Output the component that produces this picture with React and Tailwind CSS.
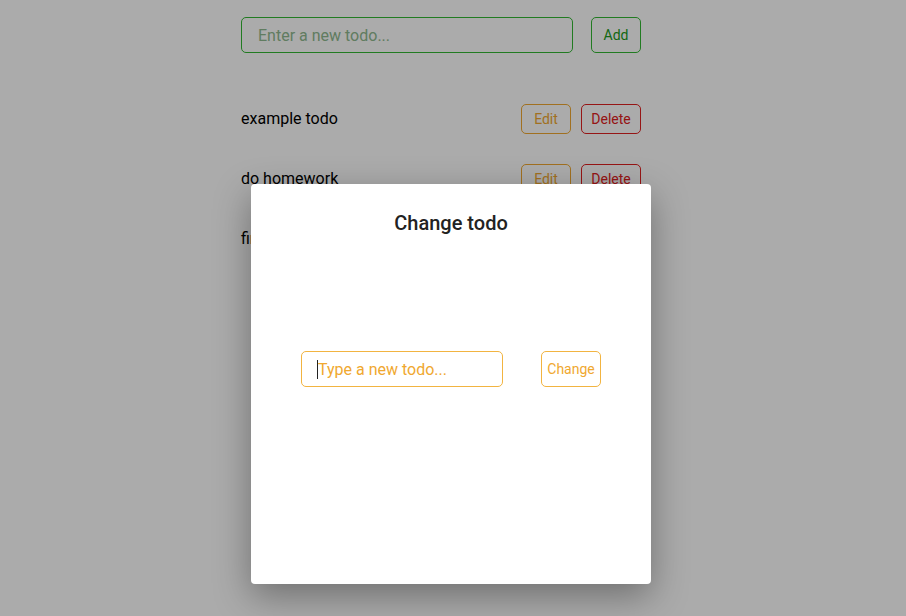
import { useState } from 'react';

const font = { fontFamily: 'Roboto, "Noto Sans", sans-serif' };

function TodoRow({ text }) {
  return (
    <div className="flex items-center justify-between h-[30px] mb-[30px]">
      <span className="text-[16px] text-black">{text}</span>
      <div className="flex gap-[10px]">
        <button className="w-[50px] h-[30px] rounded-[5px] border border-[#f0a830] text-[#f0a830] text-[14px] bg-transparent">
          Edit
        </button>
        <button className="w-[60px] h-[30px] rounded-[5px] border border-[#e02020] text-[#e02020] text-[14px] bg-transparent">
          Delete
        </button>
      </div>
    </div>
  );
}

export default function App() {
  const [todos] = useState(['example todo', 'do homework', 'finish project']);

  return (
    <div className="relative w-[906px] h-[616px] overflow-hidden bg-white" style={font}>
      {/* page */}
      <div className="w-[400px] ml-[241px] pt-[17px]">
        <div className="flex justify-between mb-[51px]">
          <input
            className="w-[332px] h-[36px] rounded-[5px] border border-[#32b832] px-[16px] text-[16px] outline-none placeholder:text-[#8fb98f]"
            placeholder="Enter a new todo..."
          />
          <button className="w-[50px] h-[36px] rounded-[5px] border border-[#32b832] text-[#209a20] text-[14px]">
            Add
          </button>
        </div>
        {todos.map((t) => (
          <TodoRow key={t} text={t} />
        ))}
      </div>

      {/* overlay */}
      <div className="absolute inset-0 bg-black/[0.33]">
        <div className="absolute left-[251px] top-[184px] w-[400px] h-[400px] bg-white rounded-[4px] shadow-[0_12px_36px_rgba(0,0,0,0.35)] flex flex-col">
          <h2 className="text-center text-[20px] font-medium text-[#222] mt-[27px] leading-[24px]">Change todo</h2>
          <div className="flex justify-between items-center px-[50px] mt-[116px]">
            <div className="relative">
              <input
                className="w-[202px] h-[36px] rounded-[5px] border border-[#f2b441] px-[16px] text-[16px] outline-none placeholder:text-[#f0a830]"
                placeholder="Type a new todo..."
              />
              <span className="absolute left-[16px] top-[9px] w-px h-[19px] bg-[#222]" />
            </div>
            <button className="w-[60px] h-[36px] rounded-[5px] border border-[#f2b441] text-[#f0a830] text-[14px]">
              Change
            </button>
          </div>
        </div>
      </div>
    </div>
  );
}
